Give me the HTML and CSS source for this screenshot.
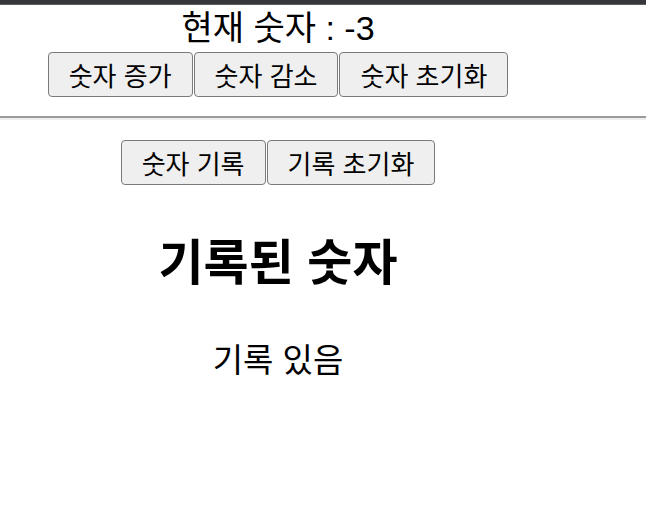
FILE: index.html
```html
<!DOCTYPE html>
<html lang="ko">
<head>
  <meta charset="UTF-8" />
  <meta name="viewport" content="width=device-width, initial-scale=1.0" />
  <title>숫자 카운터</title>
  <link rel="stylesheet" href="styles.css">
</head>
<body>
  <div class="topbar"></div>

  <div class="section">
    <div class="count">현재 숫자 : <span id="num">-3</span></div>
    <div class="btn-row">
      <button id="inc">숫자 증가</button>
      <button id="dec">숫자 감소</button>
      <button id="reset">숫자 초기화</button>
    </div>
  </div>

  <hr class="divider" />

  <div class="section">
    <div class="btn-row">
      <button id="save">숫자 기록</button>
      <button id="clear">기록 초기화</button>
    </div>
    <h1 class="record-title">기록된 숫자</h1>
    <p class="record-text">기록 있음</p>
  </div>
</body>
</html>
```

FILE: styles.css
```css
body {
  margin: 0;
  font-family: "Liberation Sans", "Noto Sans CJK KR", sans-serif;
  color: #000;
  background: #fff;
}
.topbar {
  height: 4px;
  background: #36373b;
  border-bottom: 1px solid #5e5f62;
}
.section {
  width: 556px;
  display: flex;
  flex-direction: column;
  align-items: center;
}
.count {
  font-size: 34px;
  line-height: 46px;
}
.btn-row {
  display: flex;
  gap: 1px;
  margin-top: 1px;
}
.btn-row button {
  height: 45px;
  padding: 0 20px;
  font-family: "Liberation Sans", "Noto Sans CJK KR", sans-serif;
  font-size: 26px;
  color: #000;
  background: #efefef;
  border: 1.5px solid #7a7a7a;
  border-radius: 4px;
  cursor: pointer;
}
.btn-row button:hover { background: #e5e5e5; }
.divider {
  margin: 19px 0 20px;
  border: 0;
  border-top: 2px solid #9a9a9a;
  border-bottom: 2px solid #eeeeee;
}
.divider + .section .btn-row { margin-top: 0; }
.record-title {
  margin: 48px 0 0;
  font-size: 49px;
  line-height: 60px;
  font-weight: bold;
}
.record-text {
  margin: 48px 0 0;
  font-size: 33px;
  line-height: 40px;
}
```
